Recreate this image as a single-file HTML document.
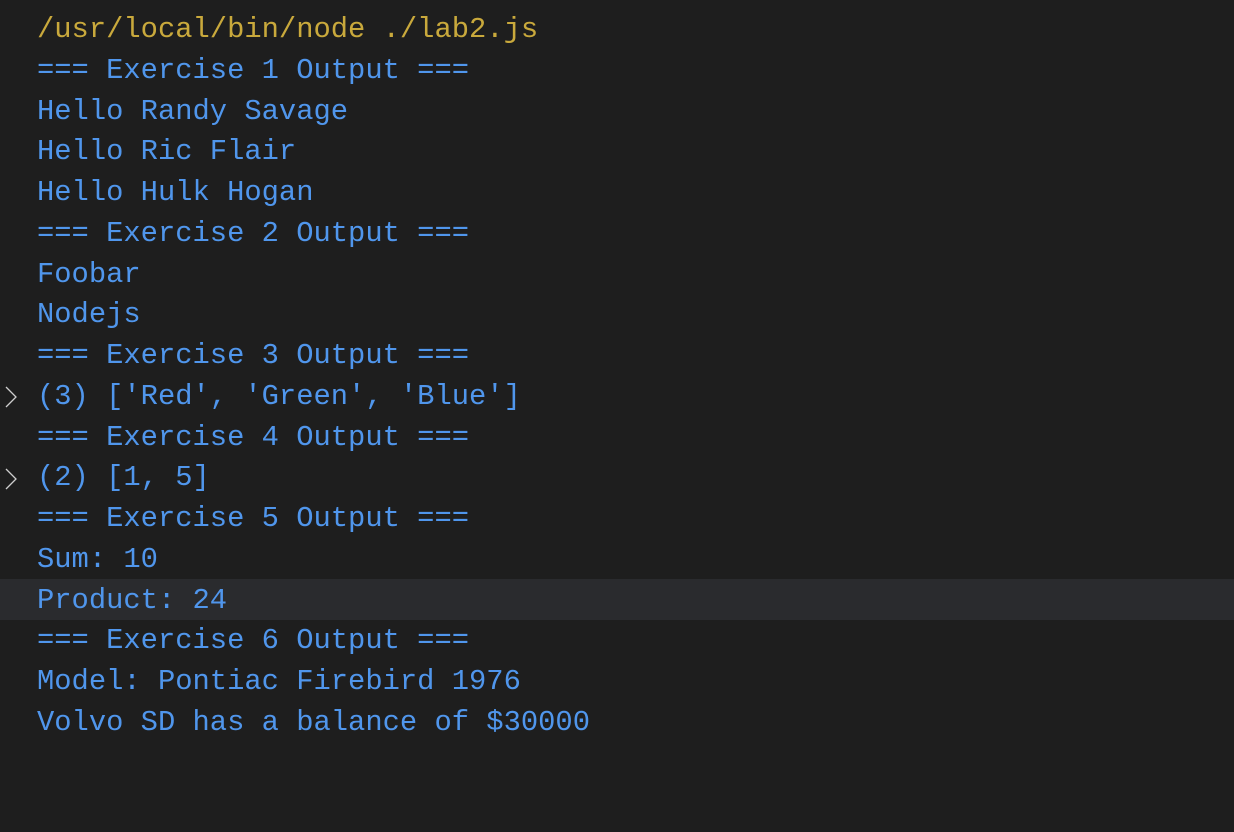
<!DOCTYPE html>
<html><head><style>
html,body{margin:0;padding:0;background:#1e1e1e;width:1234px;height:832px;overflow:hidden}
.l{position:absolute;left:37px;height:40.75px;line-height:40.75px;font-family:"Liberation Mono",monospace;font-size:28.8px;color:#5096ec;white-space:pre}
.y{color:#c9a93c}
.hl{position:absolute;left:0;width:1234px;top:579px;height:41px;background:#2a2b2e}
.ch{position:absolute;left:4px;width:14px;height:24px}
</style></head><body>
<div class="hl"></div>
<svg class="ch" style="top:385px" viewBox="0 0 14 24"><path d="M2 2 L12 12 L2 22" fill="none" stroke="#cfcfcf" stroke-width="1.3"/></svg>
<svg class="ch" style="top:467px" viewBox="0 0 14 24"><path d="M2 2 L12 12 L2 22" fill="none" stroke="#cfcfcf" stroke-width="1.3"/></svg>
<div class="l y" style="top:10px">/usr/local/bin/node ./lab2.js</div>
<div class="l" style="top:50.75px">=== Exercise 1 Output ===</div>
<div class="l" style="top:91.5px">Hello Randy Savage</div>
<div class="l" style="top:132.25px">Hello Ric Flair</div>
<div class="l" style="top:173px">Hello Hulk Hogan</div>
<div class="l" style="top:213.75px">=== Exercise 2 Output ===</div>
<div class="l" style="top:254.5px">Foobar</div>
<div class="l" style="top:295.25px">Nodejs</div>
<div class="l" style="top:336px">=== Exercise 3 Output ===</div>
<div class="l" style="top:376.75px">(3) ['Red', 'Green', 'Blue']</div>
<div class="l" style="top:417.5px">=== Exercise 4 Output ===</div>
<div class="l" style="top:458.25px">(2) [1, 5]</div>
<div class="l" style="top:499px">=== Exercise 5 Output ===</div>
<div class="l" style="top:539.75px">Sum: 10</div>
<div class="l" style="top:580.5px">Product: 24</div>
<div class="l" style="top:621.25px">=== Exercise 6 Output ===</div>
<div class="l" style="top:662px">Model: Pontiac Firebird 1976</div>
<div class="l" style="top:702.75px">Volvo SD has a balance of $30000</div>
</body></html>
